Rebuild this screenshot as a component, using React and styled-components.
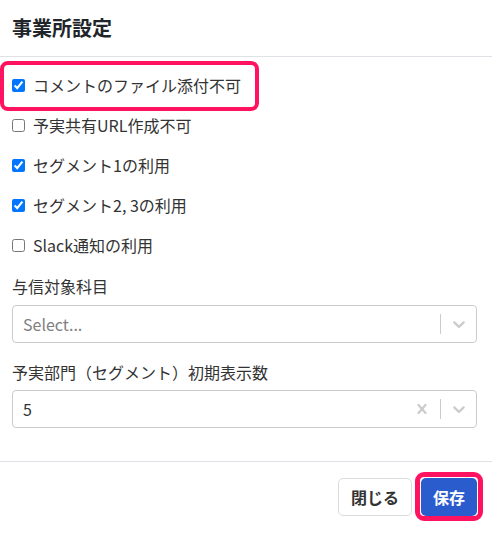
import React from "react";
import styled, { createGlobalStyle } from "styled-components";

const Global = createGlobalStyle`
  html, body { margin: 0; padding: 0; background: #fff; }
  body {
    font-family: "Noto Sans CJK JP", "Noto Sans", sans-serif;
    color: #212529;
    font-size: 16px;
  }
`;

const Modal = styled.div`
  width: 492px;
  height: 545px;
  background: #fff;
  display: flex;
  flex-direction: column;
`;

const Header = styled.div`
  padding: 14px 15px 14px 12px;
  border-bottom: 1px solid #dee2e6;
`;

const Title = styled.h1`
  margin: 0;
  font-size: 20px;
  line-height: 28px;
  font-weight: 700;
  color: #212529;
`;

const Body = styled.div`
  padding: 8px 15px 33px 12px;
  border-bottom: 1px solid #dee2e6;
  display: flex;
  flex-direction: column;
`;

const CheckRow = styled.label`
  position: relative;
  display: flex;
  align-items: center;
  gap: 8px;
  height: 40px;
  align-self: flex-start;
  font-size: 16px;
  line-height: 24px;
  color: #333;
  ${(p) =>
    p.$highlight &&
    `
    &::after {
      content: "";
      position: absolute;
      top: -4px;
      bottom: -6px;
      left: -12px;
      right: -18px;
      border: 4px solid #ff1260;
      border-radius: 8px;
      pointer-events: none;
    }
  `}
`;

const Box = styled.input.attrs({ type: "checkbox", readOnly: true })`
  width: 13px;
  height: 13px;
  margin: 0;
  accent-color: #0075ff;
`;

const FieldLabel = styled.div`
  font-size: 16px;
  line-height: 24px;
  color: #333;
  margin-top: ${(p) => p.$top}px;
  margin-bottom: ${(p) => p.$bottom}px;
`;

const SelectBox = styled.div`
  box-sizing: border-box;
  height: 38px;
  border: 1px solid #cccccc;
  border-radius: 4px;
  display: flex;
  align-items: center;
  background: #fff;
`;

const ValueArea = styled.div`
  flex: 1;
  padding: 2px 8px 2px 10px;
  font-size: 16px;
  line-height: 24px;
  color: ${(p) => (p.$placeholder ? "#808080" : "#333333")};
`;

const Indicator = styled.div`
  display: flex;
  align-items: center;
  color: #cccccc;
  padding: ${(p) => (p.$chevron ? "8px 7px 8px 8px" : "8px")};
`;

const Separator = styled.span`
  align-self: stretch;
  width: 1px;
  margin: 8px 0;
  background: #cccccc;
`;

const Footer = styled.div`
  display: flex;
  justify-content: flex-end;
  gap: 9px;
  padding: 16px 15px 0 12px;
`;

const Button = styled.button`
  position: relative;
  box-sizing: border-box;
  height: 38px;
  padding: 0 12px;
  border-radius: 5px;
  font-family: "Noto Sans CJK JP", "Noto Sans", sans-serif;
  font-size: 16px;
  font-weight: 700;
  line-height: 24px;
  border: ${(p) => (p.$primary ? "0" : "1px solid #dcdcdc")};
  background: ${(p) => (p.$primary ? "#2b5cce" : "#fff")};
  color: ${(p) => (p.$primary ? "#fff" : "#333")};
  ${(p) =>
    p.$highlight &&
    `
    &::after {
      content: "";
      position: absolute;
      top: -6px;
      bottom: -5px;
      left: -6px;
      right: -6px;
      border: 5px solid #ff1260;
      border-radius: 9px;
      pointer-events: none;
    }
  `}
`;

const Chevron = () => (
  <svg width="20" height="20" viewBox="0 0 20 20" fill="currentColor">
    <path d="M4.516 7.548c0.436-0.446 1.043-0.481 1.576 0l3.908 3.747 3.908-3.747c0.533-0.481 1.141-0.446 1.574 0 0.436 0.445 0.408 1.197 0 1.615-0.406 0.418-4.695 4.502-4.695 4.502-0.217 0.223-0.502 0.335-0.787 0.335s-0.57-0.112-0.789-0.335c0 0-4.287-4.084-4.695-4.502s-0.436-1.17 0-1.615z" />
  </svg>
);

const Cross = () => (
  <svg width="20" height="20" viewBox="0 0 20 20" fill="currentColor">
    <path d="M14.348 14.849c-0.469 0.469-1.229 0.469-1.697 0l-2.651-3.030-2.651 3.029c-0.469 0.469-1.229 0.469-1.697 0-0.469-0.469-0.469-1.229 0-1.697l2.758-3.150-2.759-3.152c-0.469-0.469-0.469-1.228 0-1.697s1.228-0.469 1.697 0l2.652 3.031 2.651-3.031c0.469-0.469 1.228-0.469 1.697 0s0.469 1.229 0 1.697l-2.758 3.152 2.758 3.150c0.469 0.469 0.469 1.229 0 1.698z" />
  </svg>
);

const options = [
  { label: "コメントのファイル添付不可", checked: true, highlight: true },
  { label: "予実共有URL作成不可", checked: false },
  { label: "セグメント1の利用", checked: true },
  { label: "セグメント2, 3の利用", checked: true },
  { label: "Slack通知の利用", checked: false },
];

export default function App() {
  return (
    <>
      <Global />
      <Modal>
        <Header>
          <Title>事業所設定</Title>
        </Header>
        <Body>
          {options.map((o) => (
            <CheckRow key={o.label} $highlight={o.highlight}>
              <Box defaultChecked={o.checked} />
              {o.label}
            </CheckRow>
          ))}
          <FieldLabel $top={9} $bottom={7}>与信対象科目</FieldLabel>
          <SelectBox>
            <ValueArea $placeholder>Select...</ValueArea>
            <Separator />
            <Indicator $chevron>
              <Chevron />
            </Indicator>
          </SelectBox>
          <FieldLabel $top={17} $bottom={6}>予実部門（セグメント）初期表示数</FieldLabel>
          <SelectBox>
            <ValueArea>5</ValueArea>
            <Indicator>
              <Cross />
            </Indicator>
            <Separator />
            <Indicator $chevron>
              <Chevron />
            </Indicator>
          </SelectBox>
        </Body>
        <Footer>
          <Button>閉じる</Button>
          <Button $primary $highlight>保存</Button>
        </Footer>
      </Modal>
    </>
  );
}
